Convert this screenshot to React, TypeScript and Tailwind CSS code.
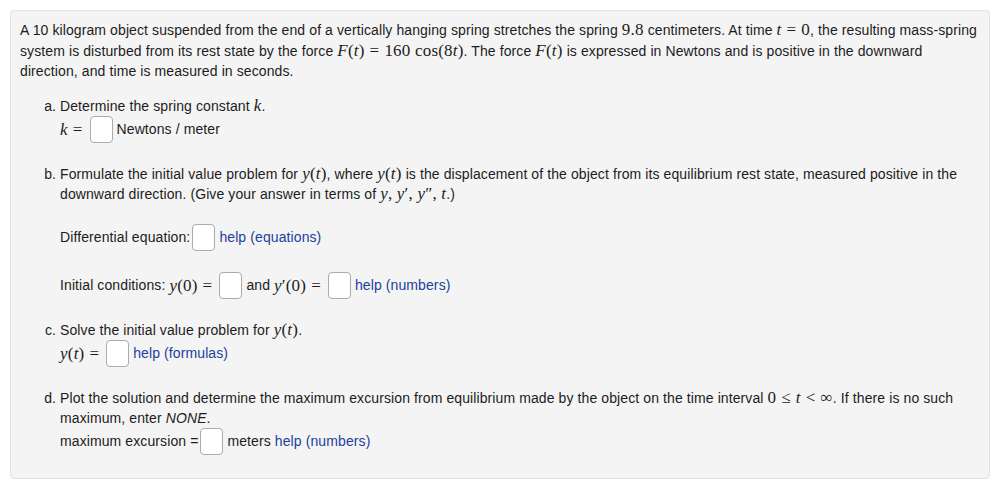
import React from "react";

const sans = "font-['Liberation_Sans','Helvetica','Arial',sans-serif]";

const M: React.FC<{ children: React.ReactNode }> = ({ children }) => (
  <span className="font-['Liberation_Serif','Times_New_Roman',serif] text-[17px] tracking-[0.2px] leading-none whitespace-nowrap">{children}</span>
);

const V: React.FC<{ children: React.ReactNode }> = ({ children }) => <i>{children}</i>;

const Eq = () => <span className="mx-[5px]">=</span>;

const Box = () => (
  <span className="inline-block w-[23px] h-[27px] ml-[2px] mr-[4px] shrink-0 border border-[#ababab] rounded-[4px] bg-white" />
);

const Help: React.FC<{ children: React.ReactNode }> = ({ children }) => (
  <a className="text-[#1d3f9c] cursor-pointer">{children}</a>
);

export default function App() {
  return (
    <div className={`p-[10px] bg-white text-[14px] tracking-[0.1px] text-[#1c1c1c] ${sans}`}>
      <div className="border border-[#e2e2e2] rounded-[4px] bg-[#f4f4f4] pl-[9px] pr-[9px] pt-[9px] pb-[23px]">
        <p className="leading-[20.5px]">
          A 10 kilogram object suspended from the end of a vertically hanging spring stretches the spring <M>9.8</M> centimeters. At time{" "}
          <M>
            <V>t</V>
            <Eq />0
          </M>
          , the resulting mass-spring
          <br />
          system is disturbed from its rest state by the force{" "}
          <M>
            <V>F</V>(<V>t</V>)<Eq />160 cos(8<V>t</V>)
          </M>
          . The force{" "}
          <M>
            <V>F</V>(<V>t</V>)
          </M>{" "}
          is expressed in Newtons and is positive in the downward
          <br />
          direction, and time is measured in seconds.
        </p>

        <ol className="list-[lower-alpha] pl-[40px] mt-[14px] leading-[20px]">
          <li>
            <div>
              Determine the spring constant{" "}
              <M>
                <V>k</V>
              </M>
              .
            </div>
            <div className="flex items-center h-[27px]">
              <M>
                <V>k</V>
                <Eq />
              </M>
              <Box />
              <span>Newtons / meter</span>
            </div>
          </li>

          <li className="mt-[21px]">
            <div>
              Formulate the initial value problem for{" "}
              <M>
                <V>y</V>(<V>t</V>)
              </M>
              , where{" "}
              <M>
                <V>y</V>(<V>t</V>)
              </M>{" "}
              is the displacement of the object from its equilibrium rest state, measured positive in the
              <br />
              downward direction. (Give your answer in terms of{" "}
              <M>
                <V>y</V>, <V>y</V>′, <V>y</V>″, <V>t</V>
              </M>
              .)
            </div>
            <div className="flex items-center h-[27px] mt-[20px]">
              <span>Differential equation:</span>
              <Box />
              <Help>help (equations)</Help>
            </div>
            <div className="flex items-center h-[27px] mt-[21px] whitespace-pre">
              <span>Initial conditions: </span>
              <M>
                <V>y</V>(0)
                <Eq />
              </M>
              <Box />
              <span>and </span>
              <M>
                <V>y</V>′(0)
                <Eq />
              </M>
              <Box />
              <Help>help (numbers)</Help>
            </div>
          </li>

          <li className="mt-[21px]">
            <div>
              Solve the initial value problem for{" "}
              <M>
                <V>y</V>(<V>t</V>)
              </M>
              .
            </div>
            <div className="flex items-center h-[27px]">
              <M>
                <V>y</V>(<V>t</V>)
                <Eq />
              </M>
              <Box />
              <Help>help (formulas)</Help>
            </div>
          </li>

          <li className="mt-[21px]">
            <div>
              Plot the solution and determine the maximum excursion from equilibrium made by the object on the time interval{" "}
              <M>
                0<span className="mx-[5px]">≤</span>
                <V>t</V>
                <span className="mx-[5px]">&lt;</span>∞
              </M>
              . If there is no such
              <br />
              maximum, enter <i>NONE</i>.
            </div>
            <div className="flex items-center h-[27px] whitespace-pre">
              <span>maximum excursion =</span>
              <Box />
              <span>meters </span>
              <Help>help (numbers)</Help>
            </div>
          </li>
        </ol>
      </div>
    </div>
  );
}
